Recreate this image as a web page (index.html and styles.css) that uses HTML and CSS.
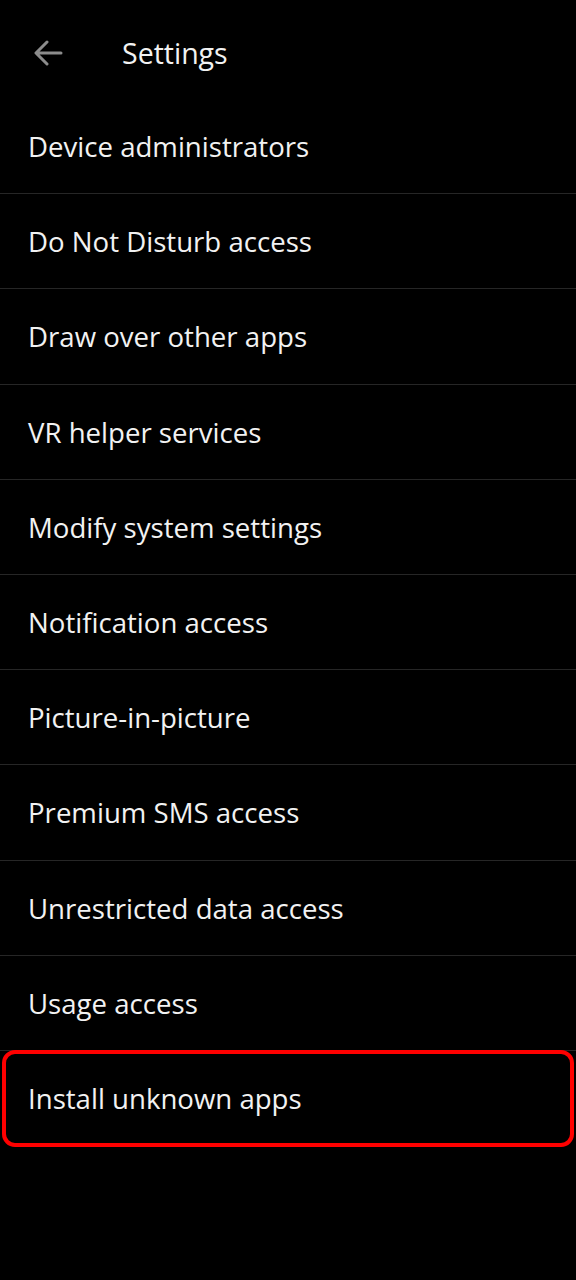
FILE: index.html
```html
<!DOCTYPE html>
<html lang="en">
<head>
<meta charset="utf-8">
<title>Settings</title>
<link rel="stylesheet" href="styles.css">
</head>
<body>
<div class="screen">
  <header class="appbar">
    <svg class="back" width="30" height="26" viewBox="0 0 30 26" aria-hidden="true">
      <path d="M28 13H4M14 2L3 13l11 11" fill="none" stroke="#8c8c8c" stroke-width="3" stroke-linecap="round" stroke-linejoin="round"/>
    </svg>
    <h1 class="title">Settings</h1>
  </header>
  <ul class="list">
    <li class="item">Device administrators</li>
    <li class="item">Do Not Disturb access</li>
    <li class="item">Draw over other apps</li>
    <li class="item">VR helper services</li>
    <li class="item">Modify system settings</li>
    <li class="item">Notification access</li>
    <li class="item">Picture-in-picture</li>
    <li class="item">Premium SMS access</li>
    <li class="item">Unrestricted data access</li>
    <li class="item">Usage access</li>
    <li class="item highlight">Install unknown apps</li>
  </ul>
</div>
</body>
</html>
```

FILE: styles.css
```css
html, body {
  margin: 0;
  padding: 0;
  background: #000;
}
.screen {
  width: 576px;
  height: 1280px;
  background: #000;
  color: #f2f2f2;
  font-family: "Open Sans", "Noto Sans", sans-serif;
  overflow: hidden;
}
.appbar {
  height: 99px;
  display: flex;
  align-items: center;
  padding-left: 33px;
  box-sizing: border-box;
  padding-top: 7px;
}
.back {
  display: block;
  flex: none;
}
.title {
  margin: 0 0 0 59px;
  font-size: 28.5px;
  font-weight: 400;
  color: #f2f2f2;
}
.list {
  list-style: none;
  margin: 0;
  padding: 0;
}
.item {
  height: 95.2px;
  box-sizing: border-box;
  border-bottom: 1.5px solid #262626;
  display: flex;
  align-items: center;
  padding-left: 28px;
  font-size: 27.6px;
  color: #f2f2f2;
}
.item.highlight {
  border-bottom: none;
  position: relative;
}
.item.highlight::after {
  content: "";
  position: absolute;
  left: 2px;
  right: 2px;
  top: -1px;
  bottom: -1px;
  border: 4px solid #f00;
  border-radius: 13px;
}
```
